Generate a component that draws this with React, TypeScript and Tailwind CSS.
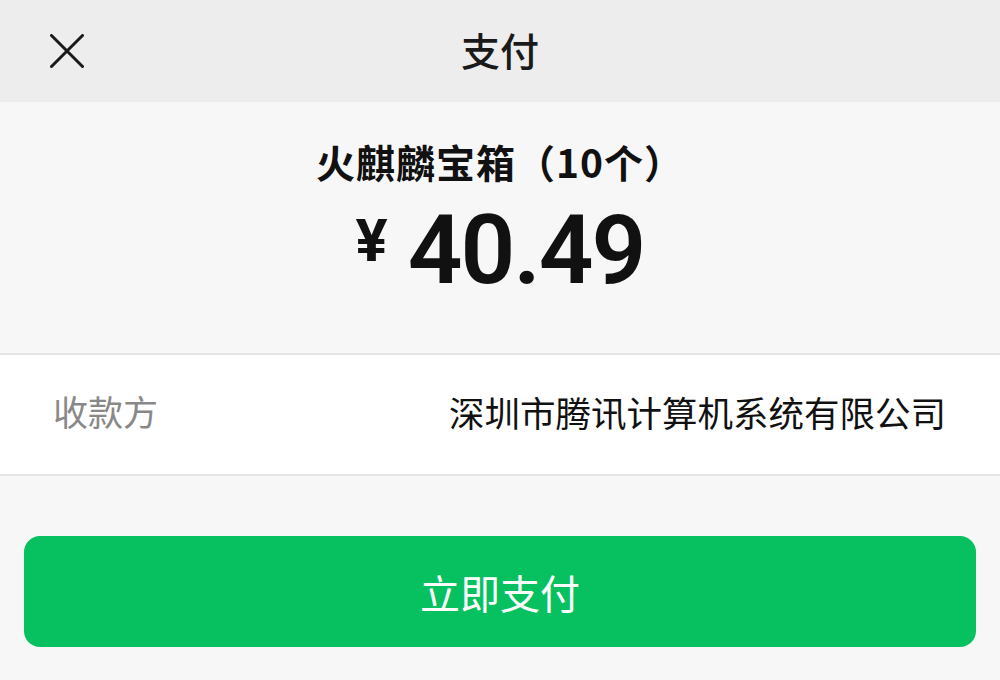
const cjk = { fontFamily: '"Noto Sans CJK SC", "Noto Sans", sans-serif' };
const num = { fontFamily: 'Roboto, "Noto Sans CJK SC", sans-serif' };

function CloseIcon() {
  return (
    <svg width="34" height="34" viewBox="0 0 34 34" fill="none" stroke="#1a1a1a" strokeWidth="3" strokeLinecap="round">
      <path d="M1.5 1.5 L32.5 32.5 M32.5 1.5 L1.5 32.5" />
    </svg>
  );
}

export default function App() {
  return (
    <div className="flex h-[680px] w-[1000px] flex-col bg-[#f7f7f7]" style={cjk}>
      <header className="relative flex h-[102px] items-center justify-center bg-[#ededed] pb-[4px]">
        <button className="absolute left-[50px] top-[34px]">
          <CloseIcon />
        </button>
        <h1 className="text-[39px] font-medium text-[#1a1a1a]">支付</h1>
      </header>

      <section className="flex h-[251px] flex-col items-center pt-[37px]">
        <div className="text-[39px] font-bold leading-[44px] tracking-[1px] text-[#111]">火麒麟宝箱（10个）</div>
        <div className="mt-[19px] flex items-center text-[#111]" style={num}>
          <span className="mr-[20px] mt-[-18px] text-[60px] font-bold leading-none">¥</span>
          <span className="text-[96px] font-semibold leading-none tracking-[-2px]">40.49</span>
        </div>
      </section>

      <div className="flex h-[123px] items-center justify-between border-y-2 border-[#e5e5e5] bg-white pb-[6px] pl-[53px] pr-[54px]">
        <span className="text-[35px] text-[#888]">收款方</span>
        <span className="text-[35.5px] text-[#111]">深圳市腾讯计算机系统有限公司</span>
      </div>

      <div className="px-[24px] pt-[60px]">
        <button className="flex h-[111px] w-full items-center justify-center rounded-[16px] bg-[#07c160] text-[40px] text-white">
          立即支付
        </button>
      </div>
    </div>
  );
}
